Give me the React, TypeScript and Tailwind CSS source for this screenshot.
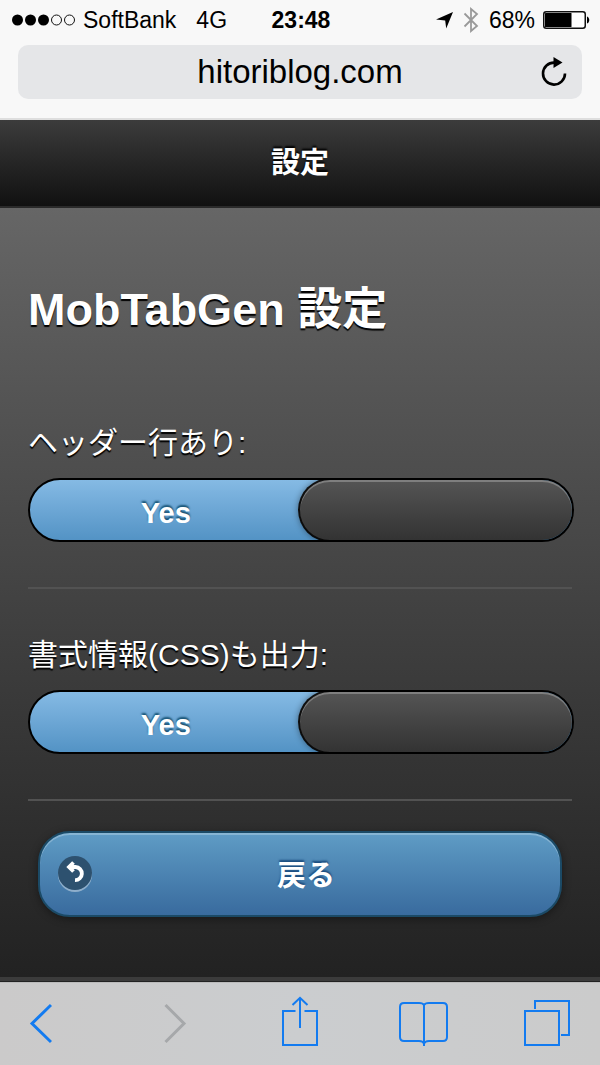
import { useState } from "react";

function SignalDots() {
  return (
    <svg width="64" height="12" viewBox="0 0 64 12" role="img" aria-label="Signal: 3 of 5">
      <circle cx="5.5" cy="6" r="5.5" />
      <circle cx="18.5" cy="6" r="5.5" />
      <circle cx="31.5" cy="6" r="5.5" />
      <circle cx="44.5" cy="6" r="5" fill="none" stroke="#111" />
      <circle cx="57.5" cy="6" r="5" fill="none" stroke="#111" />
    </svg>
  );
}

function StatusBar() {
  return (
    <div className="grid h-10 grid-cols-[1fr_auto_1fr] items-center pr-2.5 pl-3 text-[23px] leading-10">
      <div className="flex items-center">
        <SignalDots />
        <span className="ml-[7px]">SoftBank</span>
        <span className="ml-5">4G</span>
      </div>
      <time className="font-bold">23:48</time>
      <div className="flex items-center justify-end">
        <svg width="17" height="17" viewBox="0 0 17 17" aria-hidden="true">
          <path d="M17 0 L10.2 16.5 L9.2 8.6 L0 7.4 Z" />
        </svg>
        <svg className="ml-2.5" width="16" height="26" viewBox="0 0 16 26" fill="none" stroke="#999" strokeWidth="1.8" aria-hidden="true">
          <path d="M1.5 6.5 L14 19 L8 24 V2 L14 7 L1.5 19.5" />
        </svg>
        <span className="ml-2.5">68%</span>
        <svg className="ml-2" width="47" height="18" viewBox="0 0 47 18" aria-hidden="true">
          <rect x="0.75" y="0.75" width="41.5" height="16.5" rx="2.5" fill="#fff" stroke="#111" strokeWidth="1.5" />
          <rect x="2" y="2" width="26.5" height="14" rx="0.5" />
          <path d="M44 5.5 C47 6.5 47 11.5 44 12.5 Z" />
        </svg>
      </div>
    </div>
  );
}

function AddressBar() {
  return (
    <div className="mx-[18px] mt-[5px] flex h-[54px] items-center rounded-[10px] bg-[#e5e6e8] px-3.5">
      <span className="w-7" />
      <span className="flex-1 text-center text-[33px] leading-10">hitoriblog.com</span>
      <button type="button" aria-label="Reload" className="w-7">
        <svg width="28" height="32" viewBox="0 0 28 32" fill="none">
          <path d="M25 17.500 A11 11 0 1 1 14.500 6.600" stroke="#000" strokeWidth="2.6" />
          <path d="M13.5 1 L22.500 6.400 L13.500 12 Z" fill="#000" />
        </svg>
      </button>
    </div>
  );
}

function FlipSwitch({ id, label }: { id: string; label: string }) {
  const [on, setOn] = useState(true);
  return (
    <div className="border-b-2 border-[#525252] pt-[46px] pb-[45px]">
      <label htmlFor={id} className="block text-[30px] leading-10 [text-shadow:0_2px_1px_#000]">
        {label}
      </label>
      <div className="relative mt-[15px] -mr-0.5 flex h-16 overflow-hidden rounded-full border-2 border-black bg-linear-to-b from-[#85bae4] to-[#5393c5]">
        <input
          id={id}
          type="checkbox"
          role="switch"
          checked={on}
          onChange={(e) => setOn(e.target.checked)}
          className="absolute inset-0 z-10 h-full w-full cursor-pointer opacity-0"
        />
        {on && (
          <span className="flex-1 pl-1 text-center text-[29px] leading-[66px] font-bold [text-shadow:0_-2px_2px_#145072]">
            Yes
          </span>
        )}
        <span className="-my-0.5 -mr-0.5 w-[51%] rounded-full border-2 border-black/80 bg-linear-to-b from-[#555] to-[#333] shadow-[0_0_6px_rgba(0,0,0,0.4),inset_0_2px_0_rgba(255,255,255,0.25)]" />
        {!on && (
          <span className="flex-1 bg-[#333] text-center text-[29px] leading-[66px] font-bold">No</span>
        )}
      </div>
    </div>
  );
}

function BackButton() {
  return (
    <button
      type="button"
      className="mx-2.5 mt-[30px] flex h-[86px] items-center rounded-[32px] border-2 border-[#1b4a66] bg-linear-to-b from-[#5f9cc5] to-[#396b9e] px-[18px] text-[29px] leading-10 font-bold shadow-[0_2px_8px_rgba(0,0,0,0.4),inset_0_2px_0_rgba(255,255,255,0.25)] [text-shadow:0_-2px_2px_#194b7e]"
    >
      <svg width="34" height="36" viewBox="0 0 34 36" fill="none" aria-hidden="true">
        <circle cx="17" cy="19" r="17" fill="#fff" fillOpacity="0.4" />
        <circle cx="17" cy="17" r="17" fill="#2d516f" />
        <path d="M12 11 H17.500 A6.600 6.600 0 0 1 17 24.200" stroke="#fff" strokeWidth="3.8" />
        <path d="M15.500 6.500 L11 11 L15.500 15.500" stroke="#fff" strokeWidth="3.8" />
      </svg>
      <span className="flex-1 pt-1 pr-[22px]">戻る</span>
    </button>
  );
}

function Toolbar() {
  const stroke = { fill: "none", stroke: "#137bf0", strokeWidth: 2 };
  return (
    <nav
      aria-label="Browser"
      className="flex justify-between border-t border-[#bbb] bg-linear-to-r from-[#cbcaca] via-[#cbcdcf] to-[#cbcbcb] px-7 pt-[13px] pb-[17px]"
    >
      <button type="button" aria-label="Back" className="flex w-12">
        <svg width="24" height="52" viewBox="0 0 24 52" {...stroke} strokeWidth="3">
          <path d="M23 9 L4 27.5 L23 46" />
        </svg>
      </button>
      <button type="button" aria-label="Forward" disabled className="flex w-12 justify-center">
        <svg width="24" height="52" viewBox="0 0 24 52" fill="none" stroke="#a6a8aa" strokeWidth="3">
          <path d="M1.500 9 L20 27.500 L1.500 46" />
        </svg>
      </button>
      <button type="button" aria-label="Share" className="w-12">
        <svg width="48" height="52" viewBox="0 0 48 52" {...stroke}>
          <path d="M19.5 15 H7 V49 H41 V15 H28.5" />
          <path d="M24 32 V2 M16.5 9 L24 1.8 L31.5 9" />
        </svg>
      </button>
      <button type="button" aria-label="Bookmarks" className="w-12">
        <svg className="overflow-visible" width="48" height="52" viewBox="0 0 48 52" {...stroke}>
          <path d="M24 50 V9 C23 7 21 7 19 7 H4 Q0 7 0 11 V41 Q0 45 4 45 H19 C22 45 23.5 46 24 48 C24.5 46 26 45 29 45 H43 Q47 45 47 41 V11 Q47 7 43 7 H29 C27 7 25 7 24 9" />
        </svg>
      </button>
      <button type="button" aria-label="Tabs" className="w-12">
        <svg width="48" height="52" viewBox="0 0 48 52" {...stroke}>
          <rect x="1" y="15" width="34" height="34" />
          <path d="M11 13 V5 H45 V39 H37" />
        </svg>
      </button>
    </nav>
  );
}

export default function App() {
  return (
    <div className="flex min-h-screen flex-col bg-[#222] font-['Liberation_Sans','Noto_Sans_CJK_JP',sans-serif] text-black">
      <div className="border-b-2 border-[#dedede] bg-[#f8f8f8] pb-[19px]">
        <StatusBar />
        <AddressBar />
      </div>
      <header className="border-b-2 border-[#2a2a2a] bg-linear-to-b from-[#3c3c3c] to-[#111] py-[23px] text-center text-white">
        <h1 className="text-[29px] leading-10 font-bold [text-shadow:0_-2px_2px_#000]">設定</h1>
      </header>
      <main className="flex flex-1 flex-col bg-linear-to-b from-[#666] to-[#222] px-7 pt-[74px] pb-[59px] text-white">
        <h2 className="mb-[39px] text-[45px] leading-[56px] font-bold [text-shadow:0_2px_1px_#000]">
          MobTabGen 設定
        </h2>
        <FlipSwitch id="header-row" label="ヘッダー行あり:" />
        <FlipSwitch id="css-output" label="書式情報(CSS)も出力:" />
        <BackButton />
      </main>
      <div className="h-[5px] border-b border-[#222] bg-[#3b3b3b]" />
      <Toolbar />
    </div>
  );
}
